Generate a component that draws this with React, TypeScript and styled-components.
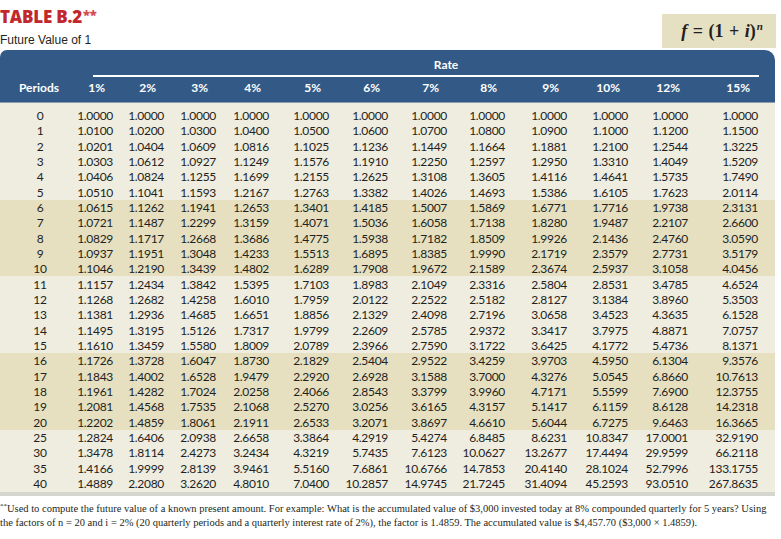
import React from "react";
import styled, { createGlobalStyle } from "styled-components";

const GlobalStyle = createGlobalStyle`
  html, body {
    margin: 0;
    padding: 0;
    background: #fff;
  }
`;

const COLS = "70px 51px 51px 52px 53px 60px 59px 59px 58px 62px 61px 60px 70px";

const rates = ["1%", "2%", "3%", "4%", "5%", "6%", "7%", "8%", "9%", "10%", "12%", "15%"];

const rows: [string, string][] = [
  ["0", "1.0000 1.0000 1.0000 1.0000 1.0000 1.0000 1.0000 1.0000 1.0000 1.0000 1.0000 1.0000"],
  ["1", "1.0100 1.0200 1.0300 1.0400 1.0500 1.0600 1.0700 1.0800 1.0900 1.1000 1.1200 1.1500"],
  ["2", "1.0201 1.0404 1.0609 1.0816 1.1025 1.1236 1.1449 1.1664 1.1881 1.2100 1.2544 1.3225"],
  ["3", "1.0303 1.0612 1.0927 1.1249 1.1576 1.1910 1.2250 1.2597 1.2950 1.3310 1.4049 1.5209"],
  ["4", "1.0406 1.0824 1.1255 1.1699 1.2155 1.2625 1.3108 1.3605 1.4116 1.4641 1.5735 1.7490"],
  ["5", "1.0510 1.1041 1.1593 1.2167 1.2763 1.3382 1.4026 1.4693 1.5386 1.6105 1.7623 2.0114"],
  ["6", "1.0615 1.1262 1.1941 1.2653 1.3401 1.4185 1.5007 1.5869 1.6771 1.7716 1.9738 2.3131"],
  ["7", "1.0721 1.1487 1.2299 1.3159 1.4071 1.5036 1.6058 1.7138 1.8280 1.9487 2.2107 2.6600"],
  ["8", "1.0829 1.1717 1.2668 1.3686 1.4775 1.5938 1.7182 1.8509 1.9926 2.1436 2.4760 3.0590"],
  ["9", "1.0937 1.1951 1.3048 1.4233 1.5513 1.6895 1.8385 1.9990 2.1719 2.3579 2.7731 3.5179"],
  ["10", "1.1046 1.2190 1.3439 1.4802 1.6289 1.7908 1.9672 2.1589 2.3674 2.5937 3.1058 4.0456"],
  ["11", "1.1157 1.2434 1.3842 1.5395 1.7103 1.8983 2.1049 2.3316 2.5804 2.8531 3.4785 4.6524"],
  ["12", "1.1268 1.2682 1.4258 1.6010 1.7959 2.0122 2.2522 2.5182 2.8127 3.1384 3.8960 5.3503"],
  ["13", "1.1381 1.2936 1.4685 1.6651 1.8856 2.1329 2.4098 2.7196 3.0658 3.4523 4.3635 6.1528"],
  ["14", "1.1495 1.3195 1.5126 1.7317 1.9799 2.2609 2.5785 2.9372 3.3417 3.7975 4.8871 7.0757"],
  ["15", "1.1610 1.3459 1.5580 1.8009 2.0789 2.3966 2.7590 3.1722 3.6425 4.1772 5.4736 8.1371"],
  ["16", "1.1726 1.3728 1.6047 1.8730 2.1829 2.5404 2.9522 3.4259 3.9703 4.5950 6.1304 9.3576"],
  ["17", "1.1843 1.4002 1.6528 1.9479 2.2920 2.6928 3.1588 3.7000 4.3276 5.0545 6.8660 10.7613"],
  ["18", "1.1961 1.4282 1.7024 2.0258 2.4066 2.8543 3.3799 3.9960 4.7171 5.5599 7.6900 12.3755"],
  ["19", "1.2081 1.4568 1.7535 2.1068 2.5270 3.0256 3.6165 4.3157 5.1417 6.1159 8.6128 14.2318"],
  ["20", "1.2202 1.4859 1.8061 2.1911 2.6533 3.2071 3.8697 4.6610 5.6044 6.7275 9.6463 16.3665"],
  ["25", "1.2824 1.6406 2.0938 2.6658 3.3864 4.2919 5.4274 6.8485 8.6231 10.8347 17.0001 32.9190"],
  ["30", "1.3478 1.8114 2.4273 3.2434 4.3219 5.7435 7.6123 10.0627 13.2677 17.4494 29.9599 66.2118"],
  ["35", "1.4166 1.9999 2.8139 3.9461 5.5160 7.6861 10.6766 14.7853 20.4140 28.1024 52.7996 133.1755"],
  ["40", "1.4889 2.2080 3.2620 4.8010 7.0400 10.2857 14.9745 21.7245 31.4094 45.2593 93.0510 267.8635"],
];

// bands of rows: light / tan, as in the printed table
const bands: { tan: boolean; from: number; to: number }[] = [
  { tan: false, from: 0, to: 6 },
  { tan: true, from: 6, to: 11 },
  { tan: false, from: 11, to: 16 },
  { tan: true, from: 16, to: 21 },
  { tan: false, from: 21, to: 25 },
];

const Page = styled.div`
  width: 781px;
  height: 539px;
  overflow: hidden;
`;

const Top = styled.div`
  display: flex;
  justify-content: space-between;
  align-items: flex-start;
`;

const Heading = styled.div`
  padding-top: 8px;
`;

const Title = styled.div`
  font-family: "Open Sans", Lato, sans-serif;
  font-weight: 800;
  font-size: 17px;
  line-height: 18px;
  color: #c1272d;
  letter-spacing: -0.2px;
  sup {
    font-size: 13px;
    vertical-align: top;
    line-height: 12px;
    margin-left: 1px;
    color: #d24a4f;
  }
`;

const Subtitle = styled.div`
  margin-top: 7px;
  font-family: "Liberation Sans", Arial, sans-serif;
  font-size: 12px;
  line-height: 15px;
  color: #231f20;
`;

const Formula = styled.div`
  margin: 14px 5px 0 0;
  width: 114px;
  height: 34px;
  background: #e6e0c2;
  display: flex;
  align-items: center;
  justify-content: center;
  font-family: "Liberation Serif", "Times New Roman", serif;
  font-weight: bold;
  font-size: 18px;
  color: #231f20;
  word-spacing: 1px;
  padding-left: 6px;
  box-sizing: border-box;
  i {
    font-style: italic;
  }
  sup {
    font-size: 11px;
    font-style: italic;
    vertical-align: top;
    line-height: 10px;
    margin-left: 1px;
  }
`;

const Table = styled.div`
  margin-top: 2px;
  width: 775px;
`;

const Header = styled.div`
  background: #335a86;
  border-radius: 7px 10px 0 0;
  padding: 8px 0 7px;
  border-bottom: 1px solid #8e9db2;
  color: #fff;
  font-family: Lato, "Open Sans", sans-serif;
  font-weight: 700;
  font-size: 12px;
`;

const RateTitle = styled.div`
  margin-left: 93px;
  width: 666px;
  padding: 0 0 3px 40px;
  box-sizing: border-box;
  line-height: 14px;
  text-align: center;
  border-bottom: 2px solid #fff;
`;

const Grid = styled.div`
  display: grid;
  grid-template-columns: ${COLS};
`;

const LabelRow = styled(Grid)`
  margin-top: 4px;
  line-height: 14px;
`;

const Label = styled.div<{ $first?: boolean }>`
  text-align: ${(p) => (p.$first ? "center" : "right")};
  padding: ${(p) => (p.$first ? "0 0 0 8px" : "0 16px 0 0")};
`;

const Body = styled.div`
  background: #efece0;
  padding: 5px 0 1px;
  font-family: Lato, "Open Sans", sans-serif;
  font-size: 12px;
  color: #231f20;
`;

const Band = styled.div<{ $tan: boolean }>`
  background: ${(p) => (p.$tan ? "#e6dfc0" : "transparent")};
`;

// rows are 15.33px on average: two of 15px, then one of 16px
const Row = styled(Grid)<{ $tall: boolean }>`
  height: ${(p) => (p.$tall ? 16 : 15)}px;
  align-items: center;
  line-height: 15px;
`;

const Cell = styled.div<{ $first?: boolean }>`
  text-align: ${(p) => (p.$first ? "center" : "right")};
  padding: ${(p) => (p.$first ? "0 0 0 10px" : "0 8px 0 0")};
  white-space: nowrap;
  letter-spacing: -0.3px;
`;

const BottomRule = styled.div`
  height: 4px;
  background: #d6d6d1;
`;

const Footnote = styled.p`
  margin: 6px 0 0;
  font-family: "Liberation Serif", "Times New Roman", serif;
  font-size: 10.5px;
  line-height: 14px;
  color: #231f20;
  white-space: nowrap;
  sup {
    font-size: 7px;
    line-height: 0;
  }
`;

export default function App() {
  return (
    <Page>
      <GlobalStyle />
      <Top>
        <Heading>
          <Title>
            TABLE B.2<sup>**</sup>
          </Title>
          <Subtitle>Future Value of 1</Subtitle>
        </Heading>
        <Formula>
          <span>
            <i>f</i> = (1 + <i>i</i>)<sup>n</sup>
          </span>
        </Formula>
      </Top>

      <Table>
        <Header>
          <RateTitle>Rate</RateTitle>
          <LabelRow>
            <Label $first>Periods</Label>
            {rates.map((r) => (
              <Label key={r}>{r}</Label>
            ))}
          </LabelRow>
        </Header>
        <Body>
          {bands.map((b) => (
            <Band key={b.from} $tan={b.tan}>
              {rows.slice(b.from, b.to).map(([n, vals], k) => (
                <Row key={n} $tall={(b.from + k) % 3 === 2}>
                  <Cell $first>{n}</Cell>
                  {vals.split(" ").map((v, i) => (
                    <Cell key={i}>{v}</Cell>
                  ))}
                </Row>
              ))}
            </Band>
          ))}
        </Body>
        <BottomRule />
      </Table>

      <Footnote>
        <sup>**</sup>Used to compute the future value of a known present amount. For example: What is the accumulated value of
        $3,000 invested today at 8% compounded quarterly for 5 years? Using
        <br />
        the factors of n = 20 and i = 2% (20 quarterly periods and a quarterly interest rate of 2%), the factor is 1.4859. The
        accumulated value is $4,457.70 ($3,000 × 1.4859).
      </Footnote>
    </Page>
  );
}
